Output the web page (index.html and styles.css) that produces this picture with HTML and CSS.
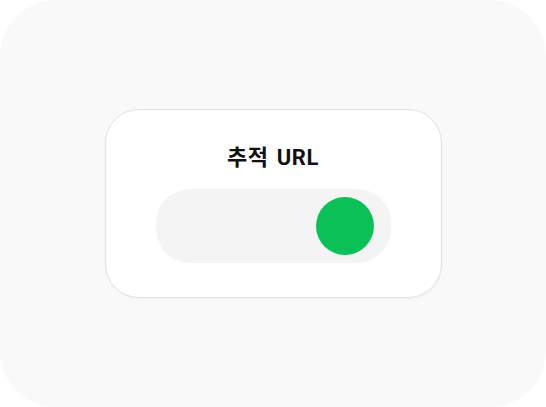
FILE: index.html
```html
<!DOCTYPE html>
<html lang="ko">
<head>
    <meta charset="UTF-8">
    <meta name="viewport" content="width=device-width, initial-scale=1.0">
    <title>추적 URL</title>
    <link rel="stylesheet" href="styles.css">
</head>
<body>
    <div class="frame">
        <div class="card">
            <h2 class="card-title">추적 URL</h2>
            <div class="toggle toggle-on" role="switch" aria-checked="true">
                <span class="toggle-knob"></span>
            </div>
        </div>
    </div>
</body>
</html>
```

FILE: styles.css
```css
body {
    margin: 0;
    background: #fff;
    font-family: Roboto, "Noto Sans CJK KR", sans-serif;
}
.frame {
    width: 546px;
    height: 407px;
    background: #f9f9f9;
    border-radius: 56px;
    display: flex;
    align-items: center;
    justify-content: center;
}
.card {
    width: 337px;
    box-sizing: border-box;
    background: #fff;
    border: 1px solid #e2e2e2;
    border-radius: 34px;
    padding: 34px 50px 34px 50px;
    box-shadow: 0 1px 2px rgba(0, 0, 0, 0.04);
}
.card-title {
    margin: 0 0 16px;
    height: 29px;
    font-size: 22px;
    line-height: 28px;
    font-weight: 700;
    letter-spacing: 0.6px;
    word-spacing: 2px;
    text-align: center;
    color: #111;
}
.toggle {
    height: 74px;
    border-radius: 34px;
    background: #f4f4f4;
    display: flex;
    align-items: center;
    justify-content: flex-end;
    padding-right: 17px;
}
.toggle-knob {
    width: 58px;
    height: 58px;
    border-radius: 50%;
    background: #0bc057;
}
```
